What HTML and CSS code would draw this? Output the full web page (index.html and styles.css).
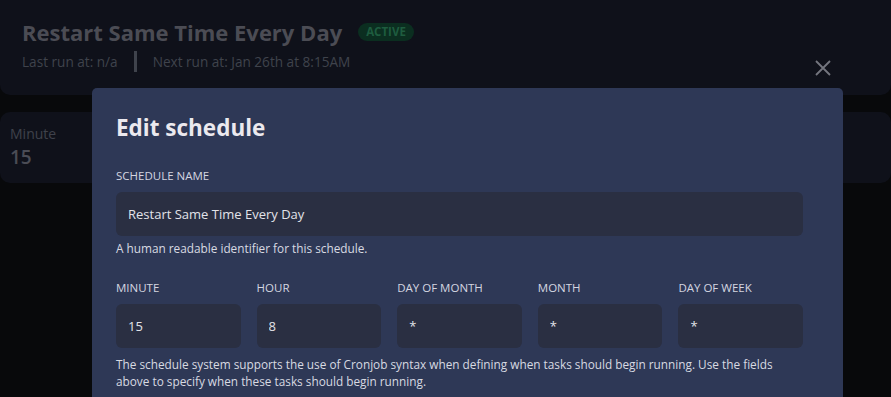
FILE: index.html
```html
<!DOCTYPE html>
<html lang="en">
<head>
  <meta charset="UTF-8" />
  <title>Edit schedule</title>
  <link rel="stylesheet" href="styles.css">
</head>
<body>
  <div class="page">
    <div class="schedule-header">
      <div class="title-row">
        <h1>Restart Same Time Every Day</h1>
        <span class="badge">Active</span>
      </div>
      <div class="run-info">
        <span>Last run at: n/a</span>
        <span class="divider"></span>
        <span>Next run at: Jan 26th at 8:15AM</span>
      </div>
    </div>

    <div class="cron-cards">
      <div class="cron-card"><span class="cron-label">Minute</span><span class="cron-value">15</span></div>
      <div class="cron-card"></div>
      <div class="cron-card"></div>
      <div class="cron-card"></div>
      <div class="cron-card"></div>
    </div>
  </div>

  <button class="close-btn" aria-label="Close">
    <svg width="16" height="16" viewBox="0 0 16 16"><path d="M1 1 L15 15 M15 1 L1 15" stroke="currentColor" stroke-width="1.8" fill="none"/></svg>
  </button>

  <div class="modal">
    <h2>Edit schedule</h2>

    <div class="field">
      <label>Schedule Name</label>
      <input type="text" value="Restart Same Time Every Day" />
      <p class="help">A human readable identifier for this schedule.</p>
    </div>

    <div class="cron-fields">
      <div class="field">
        <label>Minute</label>
        <input type="text" value="15" />
      </div>
      <div class="field">
        <label>Hour</label>
        <input type="text" value="8" />
      </div>
      <div class="field">
        <label>Day of Month</label>
        <input type="text" value="*" />
      </div>
      <div class="field">
        <label>Month</label>
        <input type="text" value="*" />
      </div>
      <div class="field">
        <label>Day of Week</label>
        <input type="text" value="*" />
      </div>
    </div>
    <p class="help cron-help">The schedule system supports the use of Cronjob syntax when defining when tasks should begin running. Use the fields above to specify when these tasks should begin running.</p>
  </div>
</body>
</html>
```

FILE: styles.css
```css
body {
  margin: 0;
  background: #08090b;
  font-family: 'Open Sans', sans-serif;
  height: 397px;
  overflow: hidden;
}

.schedule-header {
  background: #0f111a;
  border-radius: 0 0 10px 10px;
  height: 95px;
  box-sizing: border-box;
  padding: 17px 22px;
}

.title-row {
  display: flex;
  align-items: center;
  gap: 16px;
}

.title-row h1 {
  margin: 0;
  font-size: 22px;
  line-height: 30px;
  font-weight: 700;
  color: #4b4c54;
}

.badge {
  background: #0b2e20;
  color: #1e5c3f;
  font-size: 11.5px;
  line-height: 18px;
  font-weight: 700;
  text-transform: uppercase;
  border-radius: 9px;
  padding: 0 8px;
}

.run-info {
  display: flex;
  align-items: center;
  gap: 16px;
  margin-top: 4px;
  font-size: 13.6px;
  color: #3f434c;
}

.divider {
  width: 3px;
  height: 21px;
  background: #3f434c;
}

.cron-cards {
  display: flex;
  gap: 16px;
  margin-top: 17px;
}

.cron-card {
  flex: 1;
  height: 71px;
  box-sizing: border-box;
  background: #0f111a;
  border-radius: 10px;
  padding: 12px 10px;
  display: flex;
  flex-direction: column;
  gap: 2px;
}

.cron-label {
  font-size: 14px;
  line-height: 19px;
  color: #3f424b;
}

.cron-value {
  font-size: 19px;
  line-height: 25px;
  font-weight: 600;
  color: #4a4c55;
}

.close-btn {
  position: absolute;
  left: 815px;
  top: 60px;
  background: none;
  border: none;
  padding: 0;
  color: #74767f;
  line-height: 0;
}

.modal {
  position: absolute;
  left: 92px;
  top: 88px;
  width: 751px;
  height: 340px;
  box-sizing: border-box;
  background: #2e3856;
  border-radius: 5px 5px 0 0;
  padding: 25px 40px 24px 24px;
  color: #d4d6e0;
}

.modal h2 {
  margin: 0 0 25px;
  font-size: 22.5px;
  line-height: 30px;
  font-weight: 700;
  color: #ebe9ee;
}

.field label {
  display: block;
  font-size: 11.5px;
  line-height: 16px;
  text-transform: uppercase;
  margin-bottom: 8px;
}

.field input {
  display: block;
  width: 100%;
  box-sizing: border-box;
  height: 44px;
  border: none;
  border-radius: 6px;
  background: #2a2f42;
  color: #e2e3e9;
  font-family: inherit;
  font-size: 13px;
  padding: 0 12px;
}

.help {
  margin: 4px 0 0;
  font-size: 11.8px;
  line-height: 17px;
  color: #d8dae2;
}

.cron-fields {
  display: grid;
  grid-template-columns: repeat(5, 1fr);
  gap: 16px;
  margin-top: 23px;
}

.cron-help {
  margin-top: 8px;
}
```
